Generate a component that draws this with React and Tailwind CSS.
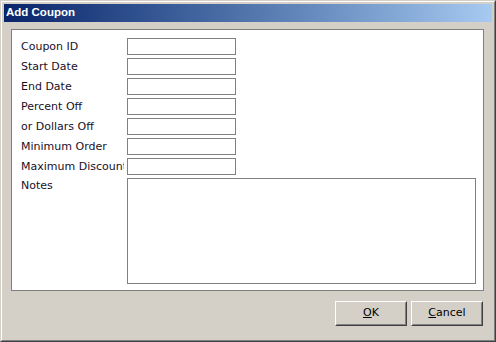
const fields = [
  "Coupon ID",
  "Start Date",
  "End Date",
  "Percent Off",
  "or Dollars Off",
  "Minimum Order",
  "Maximum Discount",
];

function WinButton({ children }) {
  return (
    <button className="w-[72px] h-[25px] border border-t-white border-l-white border-r-[#404040] border-b-[#404040] bg-[#d4d0c8] p-0">
      <div className="w-full h-full border border-t-[#d4d0c8] border-l-[#d4d0c8] border-r-[#808080] border-b-[#808080] flex items-center justify-center text-[11px] text-black">
        {children}
      </div>
    </button>
  );
}

export default function App() {
  return (
    <div
      className="w-[496px] h-[342px] border border-t-[#d4d0c8] border-l-[#d4d0c8] border-r-[#404040] border-b-[#404040] bg-[#d4d0c8]"
      style={{ fontFamily: '"DejaVu Sans", Verdana, sans-serif' }}
    >
      <div className="w-full h-full border border-t-white border-l-white border-r-[#808080] border-b-[#808080] p-[2px] flex flex-col">
        <div className="h-[18px] flex items-center pl-[2px] bg-gradient-to-r from-[#0a246a] to-[#a6caf0]">
          <span
            className="text-white font-bold text-[11.5px]"
            style={{ fontFamily: '"Liberation Sans", Arial, sans-serif' }}
          >
            Add Coupon
          </span>
        </div>
        <div className="flex-1 flex flex-col pt-[7px] pl-[7px] pr-[8px]">
          <div className="h-[262px] border border-[#808080] bg-white pt-[8px] pl-[9px] pr-[7px] flex flex-col gap-[3px]">
            {fields.map((f) => (
              <div key={f} className="flex items-center h-[17px]">
                <div className="w-[103px] overflow-hidden whitespace-nowrap text-[11px] text-[#1a0f1f] leading-[17px]">
                  {f}
                </div>
                <div className="ml-[3px] w-[109px] h-[17px] border border-[#808080] bg-white" />
              </div>
            ))}
            <div className="flex">
              <div className="w-[103px] text-[11px] text-[#1a0f1f] pt-[1px] leading-[14px]">
                Notes
              </div>
              <div className="ml-[3px] w-[349px] h-[106px] border border-[#808080] bg-white" />
            </div>
          </div>
          <div className="flex justify-end gap-[4px] mt-[10px] pr-[1px]">
            <WinButton>
              <span className="underline underline-offset-1">O</span>K
            </WinButton>
            <WinButton>
              <span className="underline underline-offset-1">C</span>ancel
            </WinButton>
          </div>
        </div>
      </div>
    </div>
  );
}
